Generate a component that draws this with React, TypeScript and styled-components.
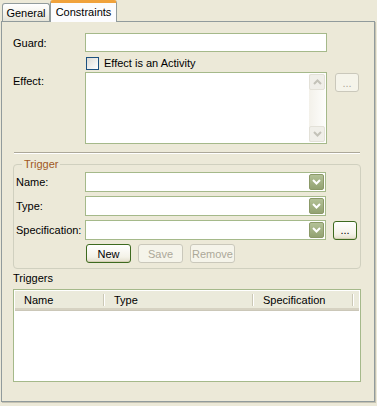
import React from "react";
import styled, { createGlobalStyle } from "styled-components";

const GlobalStyle = createGlobalStyle`
  html, body {
    margin: 0;
    padding: 0;
    background: #ece9d8;
  }
  body {
    font-family: "Liberation Sans", Arial, sans-serif;
    font-size: 11px;
    color: #000;
  }
`;

const Page = styled.div`
  width: 377px;
  height: 406px;
  padding-left: 1px;
  box-sizing: border-box;
  background: #ece9d8;
`;

const TabBar = styled.div`
  display: flex;
  align-items: flex-end;
  height: 21px;
  padding-left: 1px;
  position: relative;
  z-index: 2;
`;

const Tab = styled.div<{ active?: boolean }>`
  box-sizing: border-box;
  display: flex;
  align-items: center;
  justify-content: center;
  border: 1px solid #919b9c;
  border-bottom: none;
  border-radius: 3px 3px 0 0;
  width: ${(p) => (p.active ? "67px" : "48px")};
  height: ${(p) => (p.active ? "22px" : "18px")};
  margin-bottom: ${(p) => (p.active ? "-1px" : "0")};
  background: ${(p) =>
    p.active ? "#fcfcfe" : "linear-gradient(#ffffff, #f3f2ea 60%, #e6e4d8)"};
  border-top: ${(p) => (p.active ? "3px solid #f0a23c" : "1px solid #919b9c")};
  padding-bottom: ${(p) => (p.active ? "2px" : "0")};
`;

const Panel = styled.div`
  box-sizing: border-box;
  width: 374px;
  height: 381px;
  border: 1px solid #919b9c;
  box-shadow: 1px 1px 0 #c5c2b2;
  background: #ece9d8;
  padding: 11px 13px 0 11px;
`;

const FormGrid = styled.div`
  display: grid;
  grid-template-columns: 64px 242px 24px;
  column-gap: 8px;
  align-items: start;
`;

const Label = styled.div<{ top?: number }>`
  padding-top: ${(p) => p.top ?? 4}px;
  white-space: nowrap;
`;

const TextBox = styled.div<{ h?: number }>`
  box-sizing: border-box;
  height: ${(p) => p.h ?? 19}px;
  border: 1px solid #a5b98a;
  background: #fff;
  position: relative;
`;

const CheckRow = styled.label`
  grid-column: 2 / 4;
  display: flex;
  align-items: center;
  gap: 5px;
  height: 14px;
  margin: 4px 0 2px 1px;
`;

const CheckBox = styled.span`
  box-sizing: border-box;
  width: 13px;
  height: 13px;
  border: 1px solid #1c5180;
  background: linear-gradient(135deg, #dcdbd5, #ffffff);
`;

const ScrollBar = styled.div`
  position: absolute;
  right: 1px;
  top: 1px;
  bottom: 1px;
  width: 16px;
  display: flex;
  flex-direction: column;
  justify-content: space-between;
  background: linear-gradient(90deg, #f3f1ea, #fdfdfb);
`;

const ScrollBtn = styled.div`
  box-sizing: border-box;
  width: 16px;
  height: 16px;
  border: 1px solid #e3e1d8;
  border-radius: 2px;
  background: #f0efe9;
  display: flex;
  align-items: center;
  justify-content: center;
`;

const Button = styled.div<{ disabled?: boolean; w?: number }>`
  box-sizing: border-box;
  width: ${(p) => p.w ?? 45}px;
  height: 19px;
  display: flex;
  align-items: center;
  justify-content: center;
  border: 1px solid ${(p) => (p.disabled ? "#cac8bb" : "#3d6a1f")};
  border-radius: 3px;
  color: ${(p) => (p.disabled ? "#aca899" : "#000")};
  background: ${(p) =>
    p.disabled ? "#f5f4ea" : "linear-gradient(#ffffff, #f4f2e8 70%, #e3dfcc)"};
  box-shadow: ${(p) => (p.disabled ? "none" : "inset 0 -1px 0 #d6d0b6")};
`;

const Separator = styled.div`
  height: 1px;
  background: #aca899;
  border-bottom: 1px solid #fff;
  margin: 8px 0 0 1px;
  width: 346px;
`;

const Group = styled.fieldset`
  box-sizing: border-box;
  width: 348px;
  margin: 4px 0 0 0;
  padding: 2px 0 5px 2px;
  border: 1px solid #d0d0bf;
  border-radius: 4px;
`;

const Legend = styled.legend`
  color: #a0581e;
  padding: 0 2px;
  margin-left: 6px;
  font-size: 11px;
`;

const GroupGrid = styled.div`
  display: grid;
  grid-template-columns: 62px 241px 24px;
  column-gap: 7px;
  row-gap: 4px;
  align-items: center;
`;

const Combo = styled.div`
  box-sizing: border-box;
  height: 20px;
  border: 1px solid #a5b98a;
  background: #fff;
  display: flex;
  justify-content: flex-end;
  padding: 1px;
  grid-column: 2;
`;

const DropBtn = styled.div`
  width: 15px;
  height: 16px;
  border-radius: 2px;
  background: linear-gradient(#b3c197, #93a272);
  border: 1px solid #8b9968;
  box-sizing: border-box;
  display: flex;
  align-items: center;
  justify-content: center;
`;

const ButtonRow = styled.div`
  grid-column: 2 / 4;
  display: flex;
  gap: 7px;
  margin-left: 1px;
`;

const SectionLabel = styled.div`
  margin: 3px 0 5px 0;
`;

const ListView = styled.div`
  box-sizing: border-box;
  width: 348px;
  height: 93px;
  border: 1px solid #a5b98a;
  background: #fff;
  padding: 1px;
`;

const ListHeader = styled.div`
  display: flex;
  height: 17px;
  background: #ebeadb;
  border-bottom: 2px solid #d6d2c2;
  box-shadow: 0 1px 0 #cbc7b8;
`;

const HeaderCell = styled.div<{ w: number }>`
  box-sizing: border-box;
  width: ${(p) => p.w}px;
  padding-left: 9px;
  display: flex;
  align-items: center;
  position: relative;
  &::after {
    content: "";
    position: absolute;
    right: 0;
    top: 3px;
    bottom: 2px;
    width: 2px;
    border-left: 1px solid #cbc8b6;
    border-right: 1px solid #fff;
    box-sizing: border-box;
  }
`;

const Chevron = ({ up, color }: { up?: boolean; color: string }) => (
  <svg width="9" height="6" viewBox="0 0 9 6">
    <path
      d={up ? "M1 5 L4.5 1.5 L8 5" : "M1 1 L4.5 4.5 L8 1"}
      stroke={color}
      strokeWidth="2"
      fill="none"
    />
  </svg>
);

const ComboBox = () => (
  <Combo>
    <DropBtn>
      <Chevron color="#ffffff" />
    </DropBtn>
  </Combo>
);

export default function App() {
  return (
    <Page>
      <GlobalStyle />
      <TabBar>
        <Tab>General</Tab>
        <Tab active>Constraints</Tab>
      </TabBar>
      <Panel>
        <FormGrid>
          <Label>Guard:</Label>
          <TextBox />
          <div />
          <div />
          <CheckRow>
            <CheckBox />
            Effect is an Activity
          </CheckRow>
          <Label top={3}>Effect:</Label>
          <TextBox h={72}>
            <ScrollBar>
              <ScrollBtn>
                <Chevron up color="#c3c2b8" />
              </ScrollBtn>
              <ScrollBtn>
                <Chevron color="#c3c2b8" />
              </ScrollBtn>
            </ScrollBar>
          </TextBox>
          <Button disabled w={24} style={{ marginTop: 1 }}>
            ...
          </Button>
        </FormGrid>
        <Separator />
        <Group>
          <Legend>Trigger</Legend>
          <GroupGrid>
            <Label top={0}>Name:</Label>
            <ComboBox />
            <div />
            <Label top={0}>Type:</Label>
            <ComboBox />
            <div />
            <Label top={0}>Specification:</Label>
            <ComboBox />
            <Button w={24}>...</Button>
            <ButtonRow>
              <Button>New</Button>
              <Button disabled>Save</Button>
              <Button disabled>Remove</Button>
            </ButtonRow>
          </GroupGrid>
        </Group>
        <SectionLabel>Triggers</SectionLabel>
        <ListView>
          <ListHeader>
            <HeaderCell w={90}>Name</HeaderCell>
            <HeaderCell w={149}>Type</HeaderCell>
            <HeaderCell w={100}>Specification</HeaderCell>
          </ListHeader>
        </ListView>
      </Panel>
    </Page>
  );
}
